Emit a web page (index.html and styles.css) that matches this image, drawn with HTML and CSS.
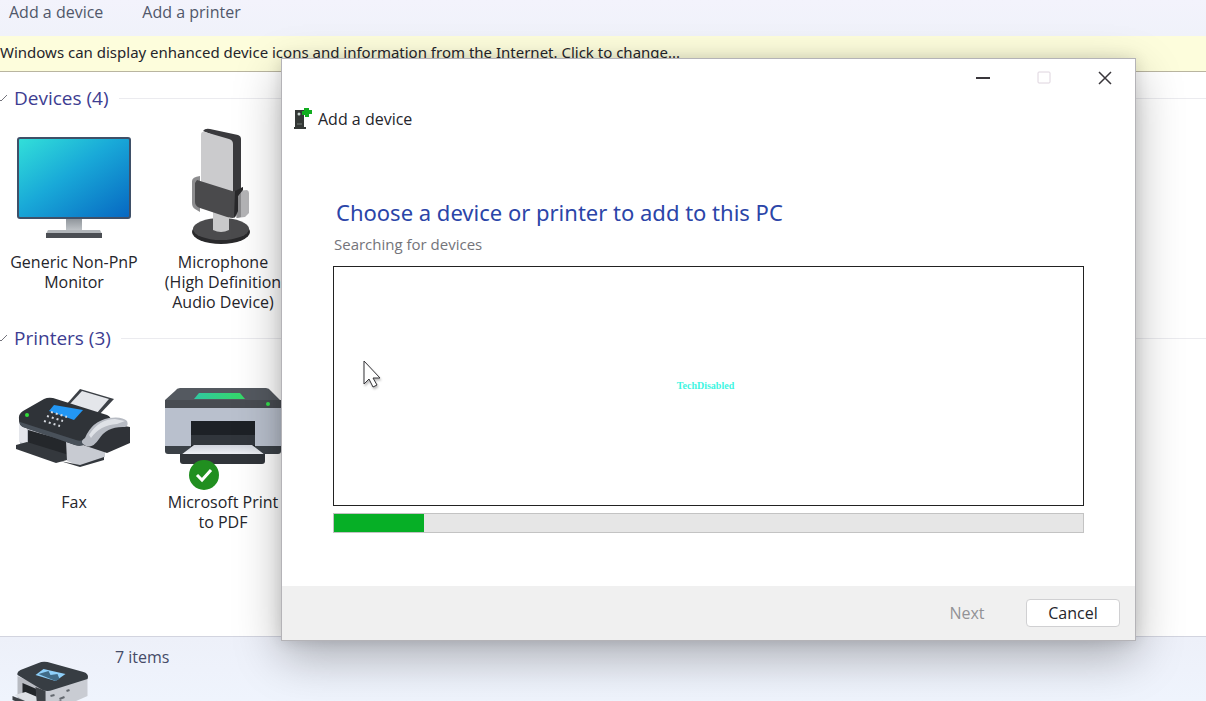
FILE: index.html
```
<!DOCTYPE html>
<html lang="en">
<head>
<meta charset="utf-8">
<title>Devices and Printers</title>
<link rel="stylesheet" href="styles.css">
</head>
<body>
<div class="explorer">
  <nav class="toolbar">
    <button type="button">Add a device</button>
    <button type="button">Add a printer</button>
  </nav>
  <button type="button" class="infobar">Windows can display enhanced device icons and information from the Internet. Click to change...</button>
  <main class="content">
    <section class="group">
      <h2 class="group-title"><svg class="chevron" viewBox="0 0 8 8"><path d="M-3 3L1 7L7 1"/></svg>Devices (4)</h2>
      <ul class="items">
        <li class="item">
          <svg class="icon" viewBox="0 0 116 120">
            <defs><linearGradient id="screen" x1="0" y1="0" x2="1" y2="1"><stop offset="0" stop-color="#32dfd9"/><stop offset=".45" stop-color="#19a9d8"/><stop offset="1" stop-color="#0768c2"/></linearGradient>
            <linearGradient id="stand" x1="0" y1="0" x2="0" y2="1"><stop offset="0" stop-color="#888e94"/><stop offset="1" stop-color="#c2c6ca"/></linearGradient></defs>
            <path fill="url(#stand)" d="M50 89h16v14H50z"/>
            <rect x="1" y="9" width="114" height="82" rx="3" fill="#3f5068"/>
            <rect x="3" y="11" width="110" height="78" rx="1" fill="url(#screen)"/>
            <path fill="#b1b5b9" d="M32 102h52l2 4H30z"/><path fill="#4b4e53" d="M30 105h56v5H30z"/>
          </svg>
          <span>Generic Non-PnP Monitor</span>
        </li>
        <li class="item">
          <svg class="icon" viewBox="0 0 116 120">
            <ellipse cx="56" cy="104" rx="29" ry="12" fill="#29292b"/><ellipse cx="56" cy="101" rx="28" ry="11" fill="#4b4b4d"/>
            <path fill="#c9c9ca" d="M48 84h16v18q-8 4-16 0z"/>
            <path fill="#b4b4b6" d="M72 63l10-1q2 1 2 3v20l-4 4-9 1z"/><path fill="#8b8b8d" d="M73 64l3-1v26l-4 1z"/>
            <path fill="#3a3a3d" d="M38 3q2-3 7-2l28 6q3 1 3 4v50l-9 4L60 12z"/>
            <path fill="#cbcbcd" d="M36 7q0-4 4-3l24 7q4 1 4 5v49L36 56z"/>
            <path fill="#8d8d8f" d="M27 53q0-4 8-5v36l-5-3q-3-2-3-6z"/>
            <path fill="#4a4a4c" d="M32 52l35 11q3 1 6-1l5-3-5 9v14q-1 7-5 8-2 0-6-1L35 80q-5-2-5-6V55z"/>
            <path fill="#29292b" d="M70 63l8-4v3l-5 6v15l-4 7z"/>
          </svg>
          <span>Microphone (High&nbsp;Definition Audio Device)</span>
        </li>
      </ul>
    </section>
    <section class="group">
      <h2 class="group-title"><svg class="chevron" viewBox="0 0 8 8"><path d="M-3 3L1 7L7 1"/></svg>Printers (3)</h2>
      <ul class="items">
        <li class="item">
          <svg class="icon" viewBox="0 0 116 120">
            <path fill="#3c4046" d="M49 38L64 21l34 10L82 48z"/><path fill="#e4e6ea" d="M53 37l13-14 27 8-13 15z"/>
            <path fill="#b9bdc5" d="M3 52l67 20v23L4 76z"/><path fill="#e4e6eb" d="M3 54l8 3v19l-8-2z"/>
            <path fill="#24272b" d="M12 62l39 11v18L12 78z"/><path fill="#34383d" d="M0 77l11-3 42 13-2 5-11 3L0 81z"/>
            <path fill="#c8cbd2" d="M50 73l14 4 25-5v17L64 98 51 93z"/><path fill="#33373d" d="M44 93l20 4 24-8v3L64 99z"/>
            <path fill="#2f3338" d="M3 52Q2 46 7 43l21-12q4-2 9-1l54 17q5 2 3 7L71 75q-5 4-12 2L7 59q-4-2-4-7z"/>
            <path fill="#49515a" d="M4 54l56 18q6 2 11-2L94 53v4L71 75q-5 4-12 2L7 59q-4-2-3-5z"/>
            <path fill="#2397f4" d="M38 37l29 5-9 10-25-9z"/>
            <g stroke="#d7dbe1" stroke-width="2" stroke-dasharray="2 3"><path d="M35 44l16 5M31 48l16 5M28 53l16 5"/></g>
            <circle cx="11" cy="47" r="2" fill="#31de38"/>
            <path fill="#2f3237" d="M81 65l22-8 11 2v16L91 85 67 77z"/>
            <path fill="#b7bbc3" d="M69 70q7-17 24-20 13-2 18 3 2 5-2 6-18-1-26 12-8 12-16 5-3-3 2-6z"/><path fill="#dfe2e7" d="M73 67q10-16 26-16l10 2-8 3q-17 1-26 14z"/>
          </svg>
          <span>Fax</span>
        </li>
        <li class="item">
          <svg class="icon" viewBox="0 0 116 120">
            <defs><linearGradient id="panel"><stop stop-color="#31c8a1"/><stop offset="1" stop-color="#35d966"/></linearGradient>
            <linearGradient id="paper" x1="0" y1="0" x2="0" y2="1"><stop stop-color="#cfd3dc"/><stop offset="1" stop-color="#f1f3f7"/></linearGradient></defs>
            <path fill="#545960" d="M15 20h86q3 0 5 3l9 9H0l10-9q2-3 5-3z"/><path fill="#484c52" d="M0 32h116v9H0z"/>
            <path fill="url(#panel)" d="M34 25h41l5 6H29z"/><circle cx="103" cy="36" r="2" fill="#35df4c"/>
            <path fill="#b9c0cd" d="M0 40h116v39H0z"/><path fill="#3b4147" d="M0 78h116v5q0 3-3 3H3q-3 0-3-3z"/>
            <path fill="#1d2126" d="M26 53h64v26H26z"/><path fill="#31363c" d="M26 67h64v10H26z"/>
            <path fill="url(#paper)" d="M29 77h58l13 10H16z"/><path fill="#31353a" d="M15 86h85v7q0 3-3 3H18q-3 0-3-3z"/>
            <circle cx="39" cy="107" r="15" fill="#218f20"/><path d="M32 107l5 5 9-10" fill="none" stroke="#fff" stroke-width="3"/>
          </svg>
          <span>Microsoft Print to&nbsp;PDF</span>
        </li>
      </ul>
    </section>
  </main>
  <footer class="details">
    <svg class="details-icon" viewBox="0 0 76 46">
      <path fill="#b8bbc2" d="M5 15l29 13v24L5 41z"/><path fill="#c9ccd3" d="M33 28l42-11v18L34 53z"/>
      <path fill="#373d43" d="M5 14Q4 11 8 9L26 2q4-2 9-1l36 10q6 2 4 7L40 29q-5 2-10 0z"/>
      <path fill="#8fd0fa" d="M31 8l22 5-10 7-20-6z"/><path fill="#416b87" d="M26 13l10-3 2 4 7-1 2 5-4 2z"/>
      <path fill="#22262a" d="M10 22l14 6v12l-14-5z"/><path fill="#dde0e5" d="M2 34l11-3 19 8-7 8z"/><path fill="#3e4247" d="M0 35l25 10v4L0 39zM23 26l10 4v20h-8z"/><path d="M38 35l4-1m5 4l5-2m-9 6l6-2m5-10l3-1" stroke="#646970" stroke-width="2"/>
    </svg>
    <span>7 items</span>
  </footer>
</div>

<div class="dialog" role="dialog" aria-labelledby="dialog-name">
  <div class="titlebar">
    <button type="button" aria-label="Minimize"><svg viewBox="0 0 14 14"><path d="M0 7h14" stroke-width="2"/></svg></button>
    <button type="button" aria-label="Maximize" disabled><svg viewBox="0 0 14 14"><rect x="1" y="1" width="12" height="11" rx="1"/></svg></button>
    <button type="button" aria-label="Close"><svg viewBox="0 0 14 14"><path d="M1 1l12 12M13 1L1 13"/></svg></button>
  </div>
  <div class="dialog-name" id="dialog-name">
    <svg viewBox="0 0 20 24"><path fill="#343836" d="M2 3h9v17h2v2H1v-2h1z"/><circle cx="6" cy="7" r="1.5" fill="#c9d5cf"/><path stroke="#727b76" d="M4 17h5"/><path fill="#12ad20" d="M11 1h5v2h3v4h-3v3h-4V8H9V4h2z"/></svg>
    Add a device
  </div>
  <div class="dialog-body">
    <h1>Choose a device or printer to add to this PC</h1>
    <p id="status">Searching for devices</p>
    <div class="results">TechDisabled</div>
    <div class="progress" role="progressbar" aria-labelledby="status" aria-valuenow="12" aria-valuemin="0" aria-valuemax="100"><div class="progress-fill"></div></div>
  </div>
  <div class="dialog-actions">
    <button type="button" class="next" disabled>Next</button>
    <button type="button" class="cancel">Cancel</button>
  </div>
</div>
<svg class="cursor" viewBox="0 0 18 28"><path d="M1 1v23l5-5 4 8 4-2-4-7h7z"/></svg>
</body>
</html>
```
FILE: styles.css
```
* { box-sizing: border-box; }
body, h1, h2, p, ul { margin: 0; padding: 0; }
body {
  font-family: "Open Sans", "Noto Sans", sans-serif;
  font-size: 16px;
  line-height: 20px;
  color: #25252b;
  background: #fff;
}
button { font: inherit; color: inherit; border: 0; padding: 0; background: none; }
.explorer { display: flex; flex-direction: column; height: 100vh; overflow: hidden; }
.toolbar {
  display: flex;
  flex: none;
  gap: 39px;
  height: 36px;
  padding: 2px 9px 14px;
  color: #50576a;
  background: linear-gradient(#f3f3fc, #f0f2fa);
}
.infobar {
  flex: none;
  height: 36px;
  padding-bottom: 3px;
  font-family: "Noto Sans", sans-serif;
  font-size: 15px;
  white-space: nowrap;
  text-align: left;
  background: #fdfddc;
  border-bottom: 1px solid #b9b5a0;
}
.content { flex: 1; min-height: 0; }
.group { height: 240px; padding-top: 14px; }
.group-title {
  display: flex;
  align-items: center;
  font-size: 19px;
  line-height: 24px;
  font-weight: 400;
  color: #3d3d91;
}
.group-title::after { content: ""; flex: 1; height: 1px; margin-left: 10px; background: #ebebef; }
.chevron { width: 8px; height: 8px; margin-right: 6px; fill: none; stroke: #74747c; }
.items { display: flex; gap: 17px; padding: 18px 8px; list-style: none; }
.item { width: 132px; display: flex; flex-direction: column; align-items: center; text-align: center; }
.icon { width: 116px; height: 120px; margin-bottom: 4px; overflow: visible; }
.details {
  display: flex;
  flex: none;
  gap: 26px;
  height: 65px;
  padding: 10px 12px 0;
  color: #454b67;
  background: linear-gradient(#edf0f9, #eff4fd);
  border-top: 1px solid #d2d4df;
}
.details-icon { width: 77px; height: 46px; margin-top: 14px; }
.dialog {
  position: absolute;
  inset: 58px 70px 60px 281px;
  display: flex;
  flex-direction: column;
  background: #fff;
  border: 1px solid #b4b3b7;
  box-shadow: 0 16px 44px rgba(0, 0, 0, 0.28), 0 0 14px rgba(0, 0, 0, 0.12);
}
.titlebar { display: flex; justify-content: flex-end; height: 38px; padding-bottom: 3px; }
.titlebar button { width: 61px; }
.titlebar svg { width: 14px; height: 14px; fill: none; stroke: #39363b; stroke-width: 1.5; vertical-align: middle; }
.titlebar button:disabled svg { stroke: #ded4de; stroke-width: 1; }
.dialog-name { display: flex; align-items: center; gap: 5px; height: 44px; padding-left: 11px; }
.dialog-name svg { width: 20px; height: 24px; }
.dialog-body { flex: 1; display: flex; flex-direction: column; padding: 56px 51px 53px; }
h1 { font-family: "Noto Sans", sans-serif; font-size: 22px; line-height: 30px; font-weight: 400; color: #2b45a8; padding-left: 3px; }
#status { font-size: 15px; color: #74747a; margin: 7px 0 12px 1px; }
.results {
  flex: 1;
  display: grid;
  place-items: center;
  padding-right: 6px;
  border: 1px solid #222;
  font: bold 10px/12px "Liberation Serif", serif;
  color: #3ff5e2;
}
.progress { height: 20px; margin-top: 7px; border: 1px solid #c3c3c3; background: #e6e6e6; }
.progress-fill { width: 12%; height: 100%; background: #06af26; }
.dialog-actions { display: flex; justify-content: flex-end; align-items: center; gap: 12px; height: 54px; padding-right: 15px; background: #f0f0f0; }
.dialog-actions button { width: 94px; height: 28px; }
.dialog-actions .next { color: #929296; }
.dialog-actions .cancel { background: #fff; border: 1px solid #d0d0d2; border-radius: 4px; }
.cursor { position: absolute; left: 363px; top: 360px; width: 18px; height: 28px; fill: #fff; stroke: #353438; stroke-width: 1; filter: drop-shadow(1px 2px 1px #bbb); }
```
